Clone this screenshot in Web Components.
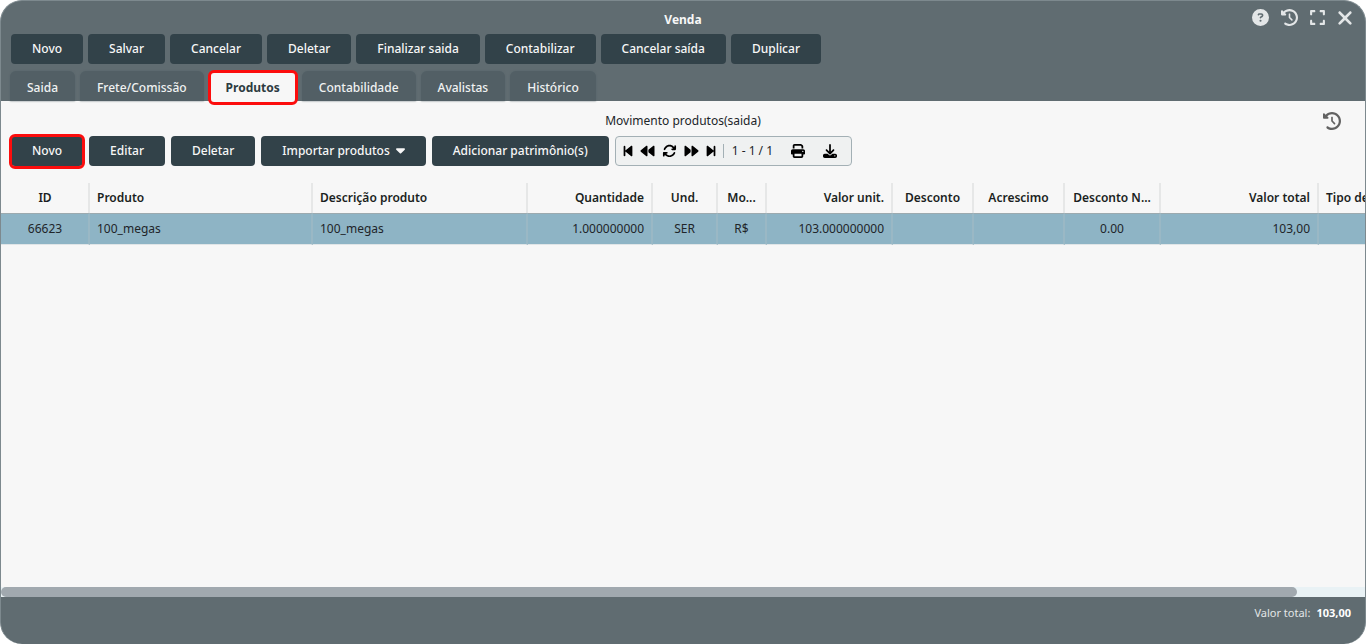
<!DOCTYPE html>
<html lang="pt-BR">
<head>
<meta charset="utf-8">
<title>Venda</title>
<style>
  html, body { margin: 0; height: 100%; }
  body { background: #fff; font: 12px/16px "Noto Sans", sans-serif; color: #212529; }
</style>
</head>
<body>
<sale-window></sale-window>
<script>
const define = (name, html, setup) => {
  const template = document.createElement('template');
  template.innerHTML = html;
  customElements.define(name, class extends HTMLElement {
    constructor() {
      super();
      this.attachShadow({ mode: 'open' }).append(template.content.cloneNode(true));
    }
    connectedCallback() { if (setup) setup(this, this.shadowRoot); }
  });
};

const back = '<path d="M459.5 440.6c9.5 7.9 22.8 9.7 34.1 4.4s18.4-16.6 18.4-29V96c0-12.4-7.2-23.7-18.4-29s-24.5-3.6-34.1 4.4L288 214.3V297.7L459.5 440.6zM256 352V96c0-12.4-7.2-23.7-18.4-29s-24.5-3.6-34.1 4.4l-192 160C4.2 237.5 0 246.5 0 256s4.2 18.5 11.5 24.6l192 160c9.5 7.9 22.8 9.7 34.1 4.4s18.4-16.6 18.4-29V352z"/>';
const step = '<path d="M267.5 440.6c9.5 7.9 22.8 9.7 34.1 4.4s18.4-16.6 18.4-29V96c0-12.4-7.2-23.7-18.4-29s-24.5-3.6-34.1 4.4l-192 160L64 241V96c0-17.7-14.3-32-32-32S0 78.3 0 96v320c0 17.7 14.3 32 32 32s32-14.3 32-32V271l11.5 9.6 192 160z"/>';
const ICONS = {
  help: ['0 0 512 512', '<path d="M256 512A256 256 0 1 0 256 0a256 256 0 1 0 0 512zM169.8 165.3c7.9-22.3 29.1-37.3 52.8-37.3h58.3c34.9 0 63.1 28.3 63.1 63.1c0 22.6-12.1 43.5-31.7 54.8L280 264.4c-.2 13-10.9 23.6-24 23.6c-13.3 0-24-10.7-24-24V250.5c0-8.6 4.6-16.5 12.1-20.8l44.3-25.4c4.7-2.7 7.6-7.7 7.6-13.1c0-8.4-6.8-15.1-15.1-15.1H222.6c-3.4 0-6.4 2.1-7.5 5.3l-.4 1.2c-4.4 12.5-18.2 19-30.6 14.6s-19-18.2-14.6-30.6l.4-1.2zM224 352a32 32 0 1 1 64 0 32 32 0 1 1-64 0z"/>'],
  history: ['0 0 512 512', '<path d="M75 75L41 41C25.9 25.9 0 36.6 0 57.9V168c0 13.3 10.7 24 24 24H134.100c21.400 0 32.100-25.900 17-41l-30.800-30.800C155 85.500 203 64 256 64c106 0 192 86 192 192s-86 192-192 192c-40.800 0-78.600-12.700-109.700-34.400c-14.500-10.100-34.400-6.600-44.600 7.900s-6.600 34.400 7.900 44.600C151.200 495 201.700 512 256 512c141.400 0 256-114.600 256-256S397.400 0 256 0C185.300 0 121.300 28.700 75 75zm181 53c-13.300 0-24 10.700-24 24V256c0 6.400 2.500 12.500 7 17l72 72c9.400 9.400 24.600 9.400 33.900 0s9.400-24.600 0-33.900l-65-65V152c0-13.300-10.700-24-24-24z"/>'],
  expand: ['0 0 448 512', '<path d="M32 32C14.300 32 0 46.300 0 64v96c0 17.700 14.300 32 32 32s32-14.300 32-32V96h64c17.700 0 32-14.300 32-32s-14.300-32-32-32H32zM64 352c0-17.700-14.300-32-32-32s-32 14.300-32 32v96c0 17.700 14.300 32 32 32h96c17.700 0 32-14.300 32-32s-14.300-32-32-32H64V352zM320 32c-17.700 0-32 14.300-32 32s14.300 32 32 32h64v64c0 17.700 14.300 32 32 32s32-14.300 32-32V64c0-17.700-14.300-32-32-32H320zM448 352c0-17.700-14.300-32-32-32s-32 14.300-32 32v64H320c-17.700 0-32 14.300-32 32s14.300 32 32 32h96c17.700 0 32-14.300 32-32V352z"/>'],
  close: ['0 0 384 512', '<path d="M342.600 150.600c12.500-12.500 12.500-32.800 0-45.300s-32.800-12.500-45.300 0L192 210.700 86.600 105.400c-12.500-12.500-32.800-12.500-45.300 0s-12.500 32.800 0 45.300L146.700 256 41.400 361.400c-12.500 12.500-12.500 32.800 0 45.300s32.800 12.500 45.300 0L192 301.300 297.400 406.600c12.500 12.500 32.800 12.500 45.300 0s12.500-32.800 0-45.300L237.300 256 342.600 150.600z"/>'],
  first: ['0 0 320 512', step],
  last: ['0 0 320 512', `<g transform="matrix(-1 0 0 1 320 0)">${step}</g>`],
  backward: ['0 0 512 512', back],
  forward: ['0 0 512 512', `<g transform="matrix(-1 0 0 1 512 0)">${back}</g>`],
  refresh: ['0 0 512 512', '<path d="M105.100 202.600c7.700-21.800 20.200-42.300 37.800-59.800c62.500-62.500 163.800-62.500 226.300 0L386.300 160H352c-17.700 0-32 14.300-32 32s14.300 32 32 32H463.500c17.700 0 32-14.300 32-32V80c0-17.700-14.300-32-32-32s-32 14.300-32 32v35.200L414.400 97.600c-87.500-87.500-229.300-87.500-316.800 0C73.200 122 55.600 150.700 44.800 181.400c-5.900 16.700 2.900 34.900 19.500 40.800s34.900-2.900 40.800-19.500zM39 289.300c-5 1.500-9.800 4.200-13.700 8.200c-4 4-6.700 8.800-8.100 14c-.8 3.400-1.200 6.700-1.200 9V432c0 17.700 14.300 32 32 32s32-14.300 32-32V396.900l17.600 17.500c87.500 87.400 229.300 87.400 316.700 0c24.400-24.400 42.100-53.100 52.900-83.700c5.900-16.700-2.900-34.900-19.500-40.800s-34.900 2.900-40.800 19.500c-7.700 21.800-20.200 42.300-37.800 59.800c-62.500 62.500-163.800 62.500-226.300 0L125.600 352H160c17.700 0 32-14.300 32-32s-14.300-32-32-32H48.400c-3.200 0-6.300 .4-9.400 1.300z"/>'],
  print: ['0 0 512 512', '<path d="M128 0C92.700 0 64 28.700 64 64v96h64V64H354.700L384 93.300V160h64V93.300c0-17-6.700-33.300-18.700-45.300L400 18.700C388 6.700 371.700 0 354.700 0H128zM384 352v96H128V352H384zm64 32h32c17.700 0 32-14.300 32-32V256c0-35.300-28.700-64-64-64H64c-35.300 0-64 28.700-64 64v96c0 17.700 14.300 32 32 32H64v64c0 35.300 28.700 64 64 64H384c35.300 0 64-28.700 64-64V384zM432 248a24 24 0 1 1 0 48 24 24 0 1 1 0-48z"/>'],
  download: ['0 0 512 512', '<path d="M288 32c0-17.700-14.300-32-32-32s-32 14.300-32 32V274.700l-73.400-73.400c-12.500-12.500-32.800-12.500-45.300 0s-12.500 32.800 0 45.300l128 128c12.500 12.500 32.800 12.500 45.300 0l128-128c12.500-12.500 12.500-32.800 0-45.300s-32.800-12.500-45.300 0L288 274.700V32zM64 352c-35.300 0-64 28.700-64 64v32c0 35.300 28.700 64 64 64H448c35.300 0 64-28.700 64-64V416c0-35.300-28.700-64-64-64H346.500l-45.300 45.300c-25 25-65.500 25-90.500 0L165.500 352H64zm368 56a24 24 0 1 1 0 48 24 24 0 1 1 0-48z"/>'],
  caret: ['0 0 10 6', '<path d="M1 0h8c.9 0 1.300 .9 .7 1.500L5.700 5.600c-.4 .4-1 .4-1.400 0L.3 1.500C-.3 .9 .1 0 1 0z"/>']
};

define('ui-icon', `
<style>
  :host { display: block; width: 16px; height: 16px; }
  svg { display: block; width: 100%; height: 100%; fill: currentColor; }
</style><svg aria-hidden="true"></svg>`, (el, root) => {
  const [box, shape] = ICONS[el.getAttribute('name')];
  const svg = root.querySelector('svg');
  svg.setAttribute('viewBox', box);
  svg.innerHTML = shape;
});

define('icon-button', `
<style>
  :host { display: block; }
  button { display: block; margin: 0; padding: 0; border: 0; background: none; color: inherit; cursor: pointer; }
</style><button type="button"><slot></slot></button>`, (el, root) => {
  root.querySelector('button').setAttribute('aria-label', el.getAttribute('label'));
});

define('action-button', `
<style>
  :host { display: block; position: relative; flex: none; }
  button { display: flex; align-items: center; gap: 6px; height: 30px; margin: 0; padding: 0 21px 1px;
    border: 0; border-radius: 4px; background: #324249; color: #f7f7f7;
    font: inherit; font-weight: 500; white-space: nowrap; cursor: pointer; }
  :host([marked])::after { content: ""; position: absolute; inset: -2px -2px -3px; border: 3px solid #fc0d0d;
    border-radius: 6px; pointer-events: none; }
</style><button type="button"><slot></slot></button>`);

define('nav-tab', `
<style>
  :host { display: block; position: relative; flex: none; }
  button { display: block; height: 30px; margin: 0; padding: 3px 17px 0; border: 0; border-radius: 6px 6px 0 0;
    background: #525f65; color: #f0f2f2; font: inherit; font-weight: 500; white-space: nowrap;
    box-shadow: 0 0 2px #56646a; cursor: pointer; }
  :host([selected]) button { background: #f7f7f7; color: #2d3b41; font-weight: 700; box-shadow: none; }
  :host([selected])::after { content: ""; position: absolute; z-index: 1; inset: -1px -1px -4px; border: 3px solid #fc0d0d;
    border-radius: 6px; pointer-events: none; }
</style><button type="button" role="tab"><slot></slot></button>`, (el, root) => {
  root.querySelector('button').setAttribute('aria-selected', el.hasAttribute('selected'));
});

define('record-pager', `
<style>
  :host { display: flex; align-items: center; box-sizing: border-box; height: 30px; padding: 0 13px 0 7px;
    border: 1px solid #a3b0b5; border-radius: 4px; background: #eff1f1; color: #000; }
  .nav { display: flex; align-items: center; gap: 7px; padding-right: 7px; border-right: 1px solid #a3b0b5; }
  .nav ui-icon { width: 15px; height: 14px; }
  .nav ui-icon.step { width: 10px; }
  span { padding: 0 17px 0 8px; color: #212529; }
  .tools { display: flex; gap: 16px; }
  .tools ui-icon { width: 16px; height: 14px; }
</style>
<div class="nav">
  <icon-button label="Primeiro"><ui-icon class="step" name="first"></ui-icon></icon-button>
  <icon-button label="Anterior"><ui-icon name="backward"></ui-icon></icon-button>
  <icon-button label="Atualizar"><ui-icon name="refresh"></ui-icon></icon-button>
  <icon-button label="Próximo"><ui-icon name="forward"></ui-icon></icon-button>
  <icon-button label="Último"><ui-icon class="step" name="last"></ui-icon></icon-button>
</div>
<span>1 - 1 / 1</span>
<div class="tools">
  <icon-button label="Imprimir"><ui-icon name="print"></ui-icon></icon-button>
  <icon-button label="Baixar"><ui-icon name="download"></ui-icon></icon-button>
</div>`);

define('product-table', `
<style>
  :host { display: flex; flex-direction: column; min-height: 0; }
  .view { flex: 1; overflow: hidden; }
  table { width: 1435px; table-layout: fixed; border-collapse: separate; border-spacing: 0; }
  th, td { box-sizing: border-box; height: 30px; padding: 0 7px; border-right: 2px solid #e6e7e7; text-align: left;
    white-space: nowrap; overflow: hidden; text-overflow: ellipsis; }
  th { font-weight: 600; color: #1b1f22; }
  td { height: 32px; background: #8eb4c5; border-right-color: #9ab8c5;
    border-top: 1px solid #9caaaf; border-bottom: 1px solid #e0e5e7; }
  .c { text-align: center; }
  .r { text-align: right; }
  th:first-child, td:first-child { padding-left: 8px; }
  .bar { height: 10px; background: #e9f2f5; }
  .thumb { width: 95%; height: 10px; border-radius: 5px; background: #a1a9af; }
</style>
<div class="view"><table><colgroup></colgroup><thead><tr></tr></thead><tbody><tr></tr></tbody></table></div>
<div class="bar"><div class="thumb"></div></div>`, (el, root) => {
  const columns = [
    [89, 'c', 'ID', '66623'],
    [223, '', 'Produto', '100_megas'],
    [215, '', 'Descrição produto', '100_megas'],
    [125, 'r', 'Quantidade', '1.000000000'],
    [65, 'c', 'Und.', 'SER'],
    [49, 'c', 'Mo...', 'R$'],
    [126, 'r', 'Valor unit.', '103.000000000'],
    [81, 'c', 'Desconto', ''],
    [91, 'c', 'Acrescimo', ''],
    [96, 'c', 'Desconto N...', '0.00'],
    [158, 'r', 'Valor total', '103,00'],
    [117, '', 'Tipo de', '']
  ];
  root.querySelector('colgroup').innerHTML = columns.map(c => `<col style="width:${c[0]}px">`).join('');
  root.querySelector('thead tr').innerHTML = columns.map(c => `<th scope="col" class="${c[1]}">${c[2]}</th>`).join('');
  root.querySelector('tbody tr').innerHTML = columns.map(c => `<td class="${c[1]}">${c[3]}</td>`).join('');
});

define('sale-window', `
<style>
  :host { display: flex; flex-direction: column; box-sizing: border-box; height: 100vh; overflow: hidden;
    border: 1px solid #7d898e; border-bottom: 0; border-radius: 22px; background: #606c71; }
  .title { display: grid; grid-template-columns: 1fr auto 1fr; align-items: center; height: 33px; padding: 0 12px; color: #e3e6e7; }
  h1 { grid-column: 2; margin: 0; padding-top: 4px; font: inherit; font-weight: 700; color: #f7f7f7; }
  .controls { display: flex; justify-content: flex-end; align-items: center; gap: 12px; }
  .controls ui-icon { width: 17px; height: 17px; }
  .controls ui-icon.expand { width: 15px; }
  .controls ui-icon.close { width: 16px; height: 22px; }
  .actions { display: flex; gap: 5px; padding: 0 10px; }
  .tabs { display: flex; gap: 5px; padding: 7px 9px 0; }
  main { display: flex; flex: 1; flex-direction: column; min-height: 0; background: #f7f7f7; }
  .heading { display: grid; grid-template-columns: 1fr auto 1fr; align-items: center; height: 35px; padding: 0 24px; }
  h2 { grid-column: 2; margin: 0; padding-top: 4px; font: inherit; }
  .history { justify-self: end; padding-top: 5px; color: #626262; }
  .history ui-icon { width: 18px; height: 18px; }
  .toolbar { display: flex; gap: 6px; padding: 0 10px 17px; }
  .toolbar ui-icon { width: 9px; height: 6px; }
  product-table { flex: 1; }
  footer { display: flex; justify-content: flex-end; gap: 6px; height: 39px; padding: 8px 14px 0; color: #e3e6e7; font-size: 11px; }
  strong { color: #fff; }
</style>
<header>
  <div class="title">
    <h1>Venda</h1>
    <div class="controls">
      <icon-button label="Ajuda"><ui-icon name="help"></ui-icon></icon-button>
      <icon-button label="Histórico"><ui-icon name="history"></ui-icon></icon-button>
      <icon-button label="Expandir"><ui-icon class="expand" name="expand"></ui-icon></icon-button>
      <icon-button label="Fechar"><ui-icon class="close" name="close"></ui-icon></icon-button>
    </div>
  </div>
  <div class="actions">
    <action-button>Novo</action-button>
    <action-button>Salvar</action-button>
    <action-button>Cancelar</action-button>
    <action-button>Deletar</action-button>
    <action-button>Finalizar saida</action-button>
    <action-button>Contabilizar</action-button>
    <action-button>Cancelar saída</action-button>
    <action-button>Duplicar</action-button>
  </div>
  <nav class="tabs" role="tablist">
    <nav-tab>Saida</nav-tab>
    <nav-tab>Frete/Comissão</nav-tab>
    <nav-tab selected>Produtos</nav-tab>
    <nav-tab>Contabilidade</nav-tab>
    <nav-tab>Avalistas</nav-tab>
    <nav-tab>Histórico</nav-tab>
  </nav>
</header>
<main>
  <div class="heading">
    <h2>Movimento produtos(saida)</h2>
    <icon-button class="history" label="Histórico de produtos"><ui-icon name="history"></ui-icon></icon-button>
  </div>
  <div class="toolbar">
    <action-button marked>Novo</action-button>
    <action-button>Editar</action-button>
    <action-button>Deletar</action-button>
    <action-button>Importar produtos<ui-icon name="caret"></ui-icon></action-button>
    <action-button>Adicionar patrimônio(s)</action-button>
    <record-pager></record-pager>
  </div>
  <product-table></product-table>
</main>
<footer><span>Valor total:</span><strong>103,00</strong></footer>`);
</script>
</body>
</html>
